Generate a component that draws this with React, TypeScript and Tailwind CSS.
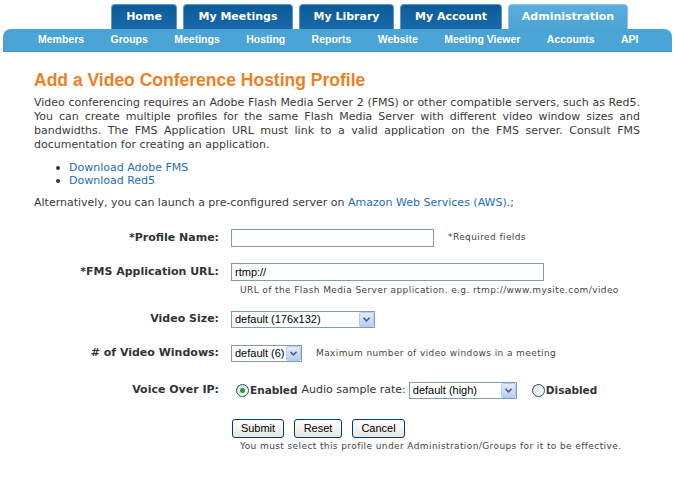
import React from "react";

const tabs = [
  { label: "Home", w: "w-[66px]" },
  { label: "My Meetings", w: "w-[110px]" },
  { label: "My Library", w: "w-[95px]" },
  { label: "My Account", w: "w-[102px]" },
];

const subnav = ["Members", "Groups", "Meetings", "Hosting", "Reports", "Website", "Meeting Viewer", "Accounts", "API"];

function Select({ w, value }: { w: string; value: string }) {
  return (
    <div className={`relative h-[17px] ${w}`}>
      <select
        defaultValue={value}
        className="appearance-none w-full h-full border border-[#7f9db9] bg-white pl-[3px] font-['Liberation_Sans'] text-[11px] leading-[15px] text-black outline-none"
      >
        <option>{value}</option>
      </select>
      {/* dropdown button */}
      <span className="pointer-events-none absolute right-[1px] top-[1px] w-[15px] h-[15px] rounded-[2px] border border-[#b5cbf5] bg-gradient-to-b from-[#e3ecfd] to-[#b8cdf7] flex items-center justify-center">
        <svg width="7" height="5" viewBox="0 0 7 5">
          <path d="M0.5 0.8 L3.5 3.8 L6.5 0.8" fill="none" stroke="#4d6185" strokeWidth="1.6" />
        </svg>
      </span>
    </div>
  );
}

function Radio({ checked }: { checked?: boolean }) {
  return (
    <span className="w-[13px] h-[13px] rounded-full border border-[#1c5180] bg-gradient-to-br from-[#dcdcd7] to-white flex items-center justify-center shrink-0">
      {checked && <span className="w-[5px] h-[5px] rounded-full bg-[#21a121]" />}
    </span>
  );
}

function Button({ label, w }: { label: string; w: string }) {
  return (
    <button className={`h-[19px] ${w} rounded-[3px] border border-[#003c74] bg-gradient-to-b from-white to-[#e6e5df] font-['Liberation_Sans'] text-[11px] text-black leading-none`}>
      {label}
    </button>
  );
}

export default function App() {
  return (
    <div className="w-[676px] h-[492px] bg-white overflow-hidden font-['DejaVu_Sans',sans-serif] text-[#333]">
      {/* top tabs */}
      <div className="flex pl-[111px] gap-[6px] pt-[4px] h-[29px]">
        {tabs.map((t) => (
          <div
            key={t.label}
            className={`${t.w} h-[25px] rounded-t-[4px] border border-b-0 border-[#5b97c9] bg-gradient-to-b from-[#0d5b98] to-[#1869aa] flex items-center justify-center pt-[1px] text-white font-bold text-[11px]`}
          >
            {t.label}
          </div>
        ))}
        <div className="w-[120px] h-[25px] rounded-t-[4px] border border-b-0 border-[#8fc4e6] bg-gradient-to-b from-[#5aaedc] to-[#4aa4d5] flex items-center justify-center pt-[1px] text-white font-bold text-[11px]">
          Administration
        </div>
      </div>

      {/* sub navigation */}
      <div className="mx-[3px] w-[669px] h-[23px] rounded-t-[8px] bg-[#4aa4d5] border-b border-[#3d94c6] flex items-center pl-[35px] gap-[26.4px] font-['Liberation_Sans'] font-bold text-[10.5px] text-white">
        {subnav.map((s) => (
          <span key={s}>{s}</span>
        ))}
      </div>

      {/* content */}
      <div className="px-[34px] pr-[36px] pt-[17px]">
        <h1 className="font-['Liberation_Sans'] font-bold text-[17.5px] leading-[22px] text-[#ee7f22]">
          Add a Video Conference Hosting Profile
        </h1>

        <div className="mt-[5px] text-[11px] leading-[14px] text-[#3a3a3a]">
          <p className="text-justify [text-align-last:justify]">
            Video conferencing requires an Adobe Flash Media Server 2 (FMS) or other compatible servers, such as Red5.
          </p>
          <p className="text-justify [text-align-last:justify]">
            You can create multiple profiles for the same Flash Media Server with different video window sizes and
          </p>
          <p className="text-justify [text-align-last:justify]">
            bandwidths. The FMS Application URL must link to a valid application on the FMS server. Consult FMS
          </p>
          <p>documentation for creating an application.</p>
        </div>

        <ul className="mt-[9px] pl-[22px] text-[11px] leading-[13px]">
          {["Download Adobe FMS", "Download Red5"].map((l) => (
            <li key={l} className="flex items-center">
              <span className="w-[4px] h-[4px] rounded-full bg-[#333] mr-[9px]" />
              <a className="text-[#1f6db8]">{l}</a>
            </li>
          ))}
        </ul>

        <p className="mt-[9px] text-[11px] leading-[14px] text-[#3a3a3a]">
          Alternatively, you can launch a pre-configured server on <a className="text-[#1f6db8]">Amazon Web Services (AWS)</a>.;
        </p>

        {/* form */}
        <div className="mt-[19px] flex flex-col text-[11px]">
          <div className="flex items-center h-[18px]">
            <label className="w-[185px] text-right font-bold text-[#333]">*Profile Name:</label>
            <input className="ml-[12px] w-[203px] h-[18px] border border-[#7f9db9] outline-none" />
            <span className="ml-[14px] text-[9px] tracking-[0.4px] text-[#444]">*Required fields</span>
          </div>

          <div className="mt-[16px] flex items-center h-[18px]">
            <label className="w-[185px] text-right font-bold text-[#333]">*FMS Application URL:</label>
            <input
              defaultValue="rtmp://"
              className="ml-[12px] w-[313px] h-[18px] border border-[#7f9db9] pl-[3px] font-['Liberation_Sans'] text-[11px] text-black outline-none"
            />
          </div>
          <div className="pl-[206px] mt-[3px] text-[9px] leading-[12px] tracking-[0.4px] text-[#444]">
            URL of the Flash Media Server application. e.g. rtmp://www.mysite.com/video
          </div>

          <div className="mt-[15px] flex items-center h-[17px]">
            <label className="w-[185px] text-right font-bold text-[#333] mr-[12px]">Video Size:</label>
            <Select w="w-[144px]" value="default (176x132)" />
          </div>

          <div className="mt-[17px] flex items-center h-[17px]">
            <label className="w-[185px] text-right font-bold text-[#333] mr-[12px]">
              # of Video Windows:
            </label>
            <Select w="w-[71px]" value="default (6)" />
            <span className="ml-[14px] text-[9px] tracking-[0.4px] text-[#444]">
              Maximum number of video windows in a meeting
            </span>
          </div>

          <div className="mt-[20px] flex items-center h-[17px]">
            <label className="w-[185px] text-right font-bold text-[#333] mr-[17px]">Voice Over IP:</label>
            <Radio checked />
            <span className="ml-[1px] font-bold text-[10.5px] text-[#333]">Enabled</span>
            <span className="ml-[4px] text-[#333]">Audio sample rate:</span>
            <span className="ml-[3px]">
              <Select w="w-[108px]" value="default (high)" />
            </span>
            <span className="ml-[15px]">
              <Radio />
            </span>
            <span className="ml-[1px] font-bold text-[10.5px] text-[#333]">Disabled</span>
          </div>

          <div className="mt-[20px] pl-[198px] flex gap-[10px]">
            <Button label="Submit" w="w-[52px]" />
            <Button label="Reset" w="w-[48px]" />
            <Button label="Cancel" w="w-[53px]" />
          </div>
          <div className="pl-[206px] mt-[2px] text-[9px] leading-[12px] tracking-[0.4px] text-[#444]">
            You must select this profile under Administration/Groups for it to be effective.
          </div>
        </div>
      </div>
    </div>
  );
}
